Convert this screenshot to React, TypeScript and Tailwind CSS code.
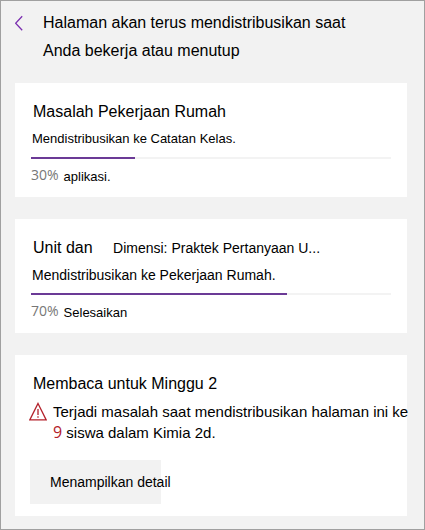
import type { ReactNode } from "react";
import clsx from "clsx";

type Progress = {
  title: ReactNode;
  target: string;
  compact?: boolean;
  percent: number;
  fill: number;
  status: string;
};

const jobs: Progress[] = [
  {
    title: "Masalah Pekerjaan Rumah",
    target: "Mendistribusikan ke Catatan Kelas.",
    compact: true,
    percent: 30,
    fill: 29,
    status: "aplikasi.",
  },
  {
    title: (
      <>
        Unit dan <span className="ml-4 text-sm leading-5">Dimensi: Praktek Pertanyaan U...</span>
      </>
    ),
    target: "Mendistribusikan ke Pekerjaan Rumah.",
    percent: 70,
    fill: 71,
    status: "Selesaikan",
  },
];

function BackIcon() {
  return (
    <svg width="10" height="16" viewBox="0 0 10 16" fill="none" stroke="#7b2fb0" strokeWidth="1.3" aria-hidden="true">
      <path d="M7.2 1.2.6 8.2l6.6 7" />
    </svg>
  );
}

function WarningIcon() {
  return (
    <svg className="shrink-0" width="18" height="20" viewBox="0 0 18 20" fill="none" stroke="#b3202a" strokeWidth="1.3" aria-hidden="true">
      <path d="M9 2.5 17.2 18.9H.8Z" />
      <path d="M9 8v6M9 15.3v1.5" />
    </svg>
  );
}

function ProgressCard({ title, target, compact, percent, fill, status }: Progress) {
  return (
    <section className="bg-white px-4 pt-[17px] pb-2.5">
      <h2 className="pl-0.5 text-base leading-6">{title}</h2>
      <p className={clsx("mt-[5px] pl-px leading-5", compact ? "text-[13px]" : "text-sm")}>{target}</p>
      <div
        role="progressbar"
        aria-label={target}
        aria-valuenow={percent}
        aria-valuemin={0}
        aria-valuemax={100}
        className="mt-2 h-0.5 bg-[#f3f3f3]"
      >
        <div className="h-full bg-[#6b3a96]" style={{ width: `${fill}%` }} />
      </div>
      <p className="mt-2 flex items-start gap-[5px] leading-5">
        <span className="font-['Open_Sans',sans-serif] text-sm leading-4 text-[#777777]">{percent}%</span>
        <span className="text-[13px]">{status}</span>
      </p>
    </section>
  );
}

export default function App() {
  return (
    <main className="min-h-screen border border-[#a0a0a0] bg-[#f2f2f2] pt-2 pr-[17px] pb-3 pl-3.5 font-['Liberation_Sans',Arial,sans-serif] text-black">
      <header className="flex items-start">
        <button type="button" aria-label="Kembali" className="flex h-7 w-7 shrink-0 items-center">
          <BackIcon />
        </button>
        <h1 className="text-base leading-7">
          Halaman akan terus mendistribusikan saat
          <br />
          Anda bekerja atau menutup
        </h1>
      </header>

      <div className="mt-[18px] flex flex-col gap-[22px]">
        {jobs.map((job) => (
          <ProgressCard key={job.target} {...job} />
        ))}

        <section className="bg-white pt-[17px] pb-3 pl-3.5">
          <h2 className="pl-1 text-base leading-6">Membaca untuk Minggu 2</h2>
          <div className="mt-[5px] flex gap-1.5">
            <WarningIcon />
            <p className="text-[15px] leading-[21px]">
              <span className="whitespace-nowrap">Terjadi masalah saat mendistribusikan halaman ini ke</span>{" "}
              <span className="font-['Open_Sans',sans-serif] text-base leading-5 text-[#b3202a]">9</span> siswa dalam
              Kimia 2d.
            </p>
          </div>
          <button type="button" className="mt-[17px] ml-px h-11 w-[131px] bg-[#f2f2f2] pl-5 text-left text-sm whitespace-nowrap">
            Menampilkan detail
          </button>
        </section>
      </div>
    </main>
  );
}
